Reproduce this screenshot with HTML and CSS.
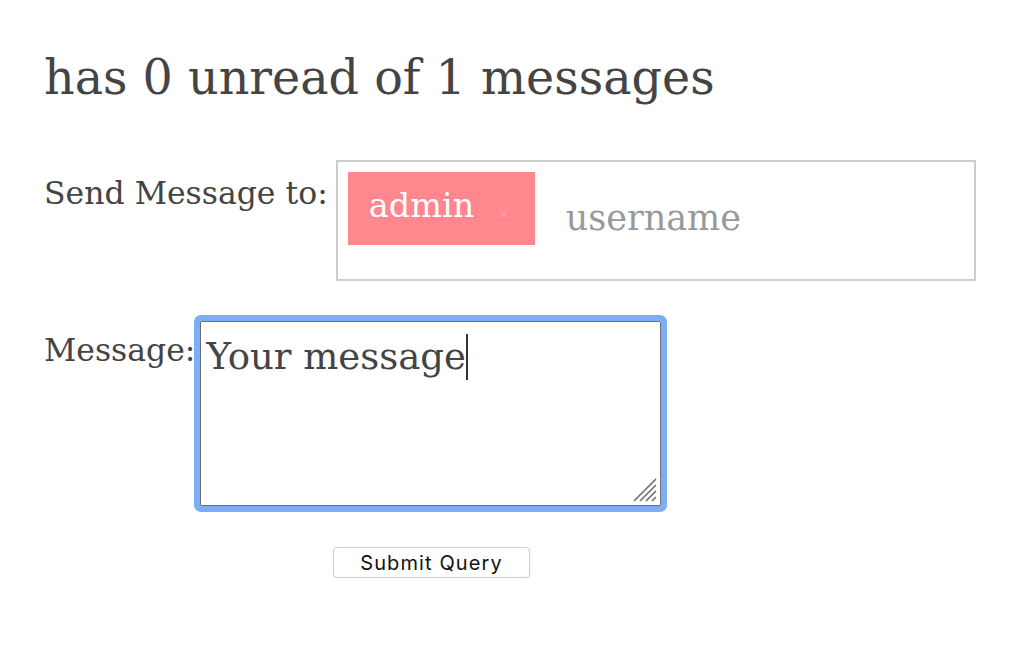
FILE: index.html
```html
<!DOCTYPE html>
<html>
<head>
<meta charset="utf-8">
<link rel="stylesheet" href="styles.css">
</head>
<body>
<main class="page">
  <h1 class="title">has 0 unread of 1 messages</h1>
  <form class="form">
    <div class="row row-to">
      <label class="label">Send Message to:</label>
      <div class="tag-input">
        <span class="tag">admin<span class="tag-x">×</span></span>
        <span class="placeholder">username</span>
      </div>
    </div>
    <div class="row row-msg">
      <label class="label">Message:</label>
      <div class="textarea">
        <span class="ta-text">Your message</span><span class="caret"></span>
        <svg class="resizer" width="24" height="24" viewBox="0 0 24 24">
          <path d="M1 23 L23 1 M7 23 L23 7 M13 23 L23 13 M19 23 L23 19" stroke="#6e6e6e" stroke-width="1.6"/>
        </svg>
      </div>
    </div>
    <div class="row row-submit">
      <button type="button" class="submit">Submit Query</button>
    </div>
  </form>
</main>
</body>
</html>
```
FILE: styles.css
```css
html, body {
  margin: 0;
  padding: 0;
  background: #fff;
}
.page {
  padding: 48px 0 0 44px;
  font-family: "DejaVu Serif", "Liberation Serif", serif;
  color: #444;
}
.title {
  margin: 0;
  font-weight: normal;
  font-size: 47.6px;
  line-height: 60px;
}
.form {
  margin-top: 52px;
}
.row {
  display: flex;
  align-items: flex-start;
}
.label {
  font-size: 31.5px;
  line-height: 40px;
}
.row-to .label {
  margin-top: 13px;
  margin-right: 8px;
}
.tag-input {
  width: 640px;
  height: 121px;
  border: 2px solid #ccc;
  box-sizing: border-box;
  padding: 10px;
  display: flex;
  align-items: flex-start;
}
.tag {
  background: #ff878d;
  color: #fff;
  width: 187px;
  height: 73px;
  box-sizing: border-box;
  padding: 14px 0 0 21px;
  font-size: 33.5px;
  line-height: 40px;
  display: flex;
}
.tag-x {
  font-family: "Liberation Sans", sans-serif;
  font-size: 18px;
  color: #ff9ea3;
  margin-left: 24px;
  margin-top: 8px;
}
.placeholder {
  color: #999;
  font-size: 35px;
  line-height: 40px;
  margin: 26px 0 0 31px;
}
.row-msg {
  margin-top: 37px;
}
.row-msg .label {
  margin-top: 12px;
  margin-right: 0;
}
.textarea {
  position: relative;
  width: 461px;
  height: 185px;
  box-sizing: border-box;
  border: 1px solid #6e6e6e;
  outline: 6px solid #7aaef6;
  outline-offset: 0;
  border-radius: 1px;
  margin: 3px 0 0 5px;
  padding: 13px 0 0 5px;
  font-size: 37px;
  line-height: 44px;
  display: flex;
  align-items: flex-start;
}
.caret {
  display: inline-block;
  width: 2px;
  height: 46px;
  background: #333;
  margin-top: -1px;
}
.resizer {
  position: absolute;
  right: 3px;
  bottom: 3px;
}
.row-submit {
  margin-top: 41px;
  padding-left: 289px;
}
.submit {
  width: 197px;
  height: 31px;
  background: #fff;
  border: 1px solid #ccc;
  border-radius: 4px;
  font-family: Inter, "Liberation Sans", Arial, sans-serif;
  font-size: 20px;
  letter-spacing: 1.1px;
  color: #111;
  padding: 0;
  box-shadow: 0 1px 1px rgba(0,0,0,0.08);
}
```
